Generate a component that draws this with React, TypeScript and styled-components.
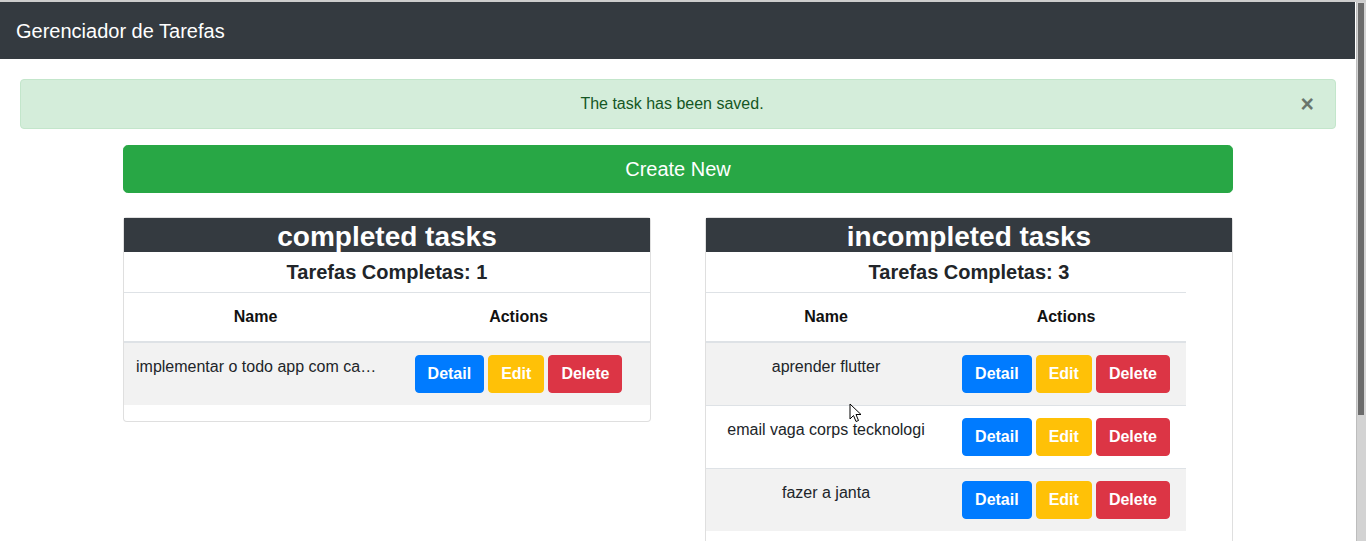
import React from "react";
import styled, { createGlobalStyle } from "styled-components";

const GlobalStyle = createGlobalStyle`
  html, body { margin: 0; padding: 0; }
  body {
    font-family: "Liberation Sans", Arial, sans-serif;
    color: #212529;
    font-size: 16px;
    line-height: 1.5;
    background: #fff;
  }
  * { box-sizing: border-box; }
`;

const Frame = styled.div`
  position: relative;
  display: flex;
  height: 100vh;
  border-top: 2px solid #cdcdcd;
  overflow: hidden;
`;

const Main = styled.main`
  flex: 1;
  min-width: 0;
  overflow: hidden;
`;

const ScrollTrack = styled.div`
  width: 10px;
  flex: none;
  background: #d3d3d3;
  border-left: 1px solid #bdbdbd;
  padding: 1px 2px 0 1px;
`;

const ScrollThumb = styled.div`
  height: 412px;
  background: #6b6b6b;
`;

const Navbar = styled.nav`
  height: 57px;
  background: #343a40;
  display: flex;
  align-items: center;
  padding: 1px 16px 0;
  margin-right: 1px;
`;

const Brand = styled.span`
  color: #fff;
  font-size: 20px;
  line-height: 30px;
`;

const Alert = styled.div`
  position: relative;
  margin: 20px 20px 16px;
  padding: 12px 32px 12px 20px;
  border: 1px solid #c3e6cb;
  border-radius: 4px;
  background: #d4edda;
  color: #155724;
  text-align: center;
  line-height: 24px;
`;

const CloseButton = styled.button`
  position: absolute;
  top: 0;
  right: 0;
  height: 100%;
  padding: 0 21px;
  border: 0;
  background: transparent;
  font-family: "Liberation Sans", Arial, sans-serif;
  font-size: 23px;
  font-weight: 700;
  line-height: 1;
  color: #000;
  opacity: 0.5;
`;

const Container = styled.div`
  width: 1110px;
  margin: 0 auto;
`;

const CreateButton = styled.button`
  display: block;
  width: 100%;
  height: 48px;
  border: 1px solid #28a745;
  border-radius: 4.8px;
  background: #28a745;
  color: #fff;
  font-family: "Liberation Sans", Arial, sans-serif;
  font-size: 20px;
  line-height: 30px;
`;

const CardsRow = styled.div`
  display: flex;
  justify-content: space-between;
  align-items: flex-start;
  margin-top: 24px;
`;

const Card = styled.section`
  width: 528px;
  border: 1px solid rgba(0, 0, 0, 0.125);
  border-radius: 4px;
  background: #fff;
`;

const CardTitle = styled.h3`
  margin: 0;
  height: 34px;
  padding-top: 3px;
  background: #343a40;
  color: #fff;
  font-size: 28px;
  font-weight: 700;
  line-height: 31px;
  text-align: center;
`;

const Count = styled.h5`
  margin: 8px 0;
  font-size: 20px;
  font-weight: 700;
  line-height: 1.2;
  text-align: center;
`;

const Table = styled.table<{ $width: string }>`
  width: ${(p) => p.$width};
  table-layout: fixed;
  border-collapse: collapse;
  margin-bottom: 16px;
`;

const Th = styled.th`
  padding: 12px;
  border-top: 1px solid #dee2e6;
  border-bottom: 2px solid #dee2e6;
  font-weight: 700;
  line-height: 24px;
  text-align: center;
  color: #111;
`;

const Row = styled.tr`
  &:nth-of-type(odd) {
    background: #f2f2f2;
  }
`;

const NameCell = styled.td<{ $align: "left" | "center" }>`
  padding: 12px ${(p) => (p.$align === "left" ? "6px" : "12px")} 12px 12px;
  border-top: 1px solid #dee2e6;
  vertical-align: top;
  line-height: 24px;
  text-align: ${(p) => p.$align};
  white-space: nowrap;
  overflow: hidden;
  text-overflow: ellipsis;
`;

const ActionsCell = styled.td`
  padding: 12px;
  border-top: 1px solid #dee2e6;
  vertical-align: top;
`;

const Actions = styled.div`
  display: flex;
  justify-content: center;
  gap: 4px;
`;

const ActionButton = styled.button<{ $color: string }>`
  height: 38px;
  padding: 0 12px;
  border: 1px solid ${(p) => p.$color};
  border-radius: 4px;
  background: ${(p) => p.$color};
  color: #fff;
  font-family: "Liberation Sans", Arial, sans-serif;
  font-size: 16px;
  font-weight: 700;
  line-height: 24px;
`;

const Cursor = styled.svg`
  position: absolute;
  left: 849px;
  top: 401px;
  pointer-events: none;
`;

type TaskListProps = {
  title: string;
  count: number;
  tasks: string[];
  tableWidth: string;
  align: "left" | "center";
};

function TaskList({ title, count, tasks, tableWidth, align }: TaskListProps) {
  return (
    <Card>
      <CardTitle>{title}</CardTitle>
      <Count>Tarefas Completas: {count}</Count>
      <Table $width={tableWidth}>
        <thead>
          <tr>
            <Th>Name</Th>
            <Th>Actions</Th>
          </tr>
        </thead>
        <tbody>
          {tasks.map((t) => (
            <Row key={t}>
              <NameCell $align={align}>{t}</NameCell>
              <ActionsCell>
                <Actions>
                  <ActionButton $color="#007bff">Detail</ActionButton>
                  <ActionButton $color="#ffc107">Edit</ActionButton>
                  <ActionButton $color="#dc3545">Delete</ActionButton>
                </Actions>
              </ActionsCell>
            </Row>
          ))}
        </tbody>
      </Table>
    </Card>
  );
}

export default function App() {
  return (
    <>
      <GlobalStyle />
      <Frame>
        <Main>
          <Navbar>
            <Brand>Gerenciador de Tarefas</Brand>
          </Navbar>
          <Alert>
            The task has been saved.
            <CloseButton aria-label="Close">×</CloseButton>
          </Alert>
          <Container>
            <CreateButton>Create New</CreateButton>
            <CardsRow>
              <TaskList
                title="completed tasks"
                count={1}
                tasks={["implementar o todo app com camadas"]}
                tableWidth="100%"
                align="left"
              />
              <TaskList
                title="incompleted tasks"
                count={3}
                tasks={["aprender flutter", "email vaga corps tecknologi", "fazer a janta"]}
                tableWidth="480px"
                align="center"
              />
            </CardsRow>
          </Container>
        </Main>
        <ScrollTrack>
          <ScrollThumb />
        </ScrollTrack>
        <Cursor width="13" height="20" viewBox="0 0 13 20">
          <path d="M1 1 L1 16 L4.5 12.5 L7 18.5 L9.5 17.5 L7 11.5 L12 11.5 Z" fill="#fff" stroke="#000" strokeWidth="1" strokeLinejoin="round" />
        </Cursor>
      </Frame>
    </>
  );
}
